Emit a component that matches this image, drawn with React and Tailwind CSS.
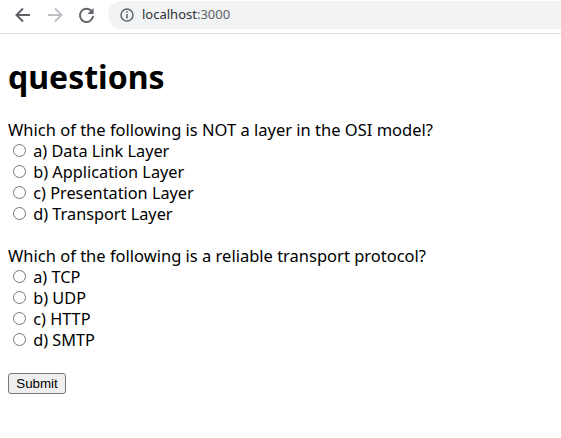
const questions = [
  {
    text: "Which of the following is NOT a layer in the OSI model?",
    options: ["a) Data Link Layer", "b) Application Layer", "c) Presentation Layer", "d) Transport Layer"],
  },
  {
    text: "Which of the following is a reliable transport protocol?",
    options: ["a) TCP", "b) UDP", "c) HTTP", "d) SMTP"],
  },
];

const Toolbar = () => (
  <div className="flex h-[34px] items-start border-b border-[#dadce0] bg-white">
    <svg className="ml-[14px] mt-[6px]" width="18" height="18" viewBox="0 0 18 18" fill="none" stroke="#5f6368" strokeWidth="2">
      <path d="M16 9H3M9 2.5 2.5 9 9 15.5" />
    </svg>
    <svg className="ml-[14px] mt-[6px]" width="18" height="18" viewBox="0 0 18 18" fill="none" stroke="#bdc1c6" strokeWidth="2">
      <path d="M2 9h13M9 2.5 15.5 9 9 15.5" />
    </svg>
    <svg className="ml-[14px] mt-[6px]" width="17" height="18" viewBox="0 0 18 18" fill="none" stroke="#5f6368" strokeWidth="2">
      <path d="M14.5 5A7 7 0 1 0 16 10" />
      <path d="M16.5 1.5v6.5H10z" fill="#5f6368" stroke="none" />
    </svg>
    <div className="ml-[13px] mt-px flex h-[28px] flex-1 items-center rounded-l-full bg-[#f1f3f4] pl-[11px]">
      <svg width="16" height="16" viewBox="0 0 16 16" fill="none" stroke="#5f6368" strokeWidth="1.5">
        <circle cx="8" cy="8" r="6" />
        <path d="M8 7v4.5M8 4.2v1.6" />
      </svg>
      <span className="ml-[7px] font-['Noto_Sans',sans-serif] text-[13px] text-[#5f6368]">
        <span className="text-[#303134]">localhost</span>:3000
      </span>
    </div>
  </div>
);

export default function App() {
  return (
    <div className="min-h-screen bg-white font-['Noto_Sans',sans-serif] text-black">
      <Toolbar />
      <div className="px-2">
        <h1 className="mt-[21px] mb-[21px] text-[32px] leading-[44px] font-bold">questions</h1>
        <form className="flex flex-col items-start">
          {questions.map((q) => (
            <div key={q.text} className="mb-[21px] text-[16.3px] leading-[21px]">
              <p className="mb-[2px] text-[16.5px] leading-[19px]">{q.text}</p>
              {q.options.map((option) => (
                <label key={option} className="block">
                  <input type="radio" name={q.text} className="mt-[3px] mr-[3px] mb-0 ml-[5px]" /> {option}
                </label>
              ))}
            </div>
          ))}
          <button
            type="button"
            className="mt-px h-[21px] w-[58px] rounded-[3px] border border-[#767676] bg-[#efefef] font-['Liberation_Sans',sans-serif] text-[13.33px] leading-none"
          >
            Submit
          </button>
        </form>
      </div>
    </div>
  );
}
